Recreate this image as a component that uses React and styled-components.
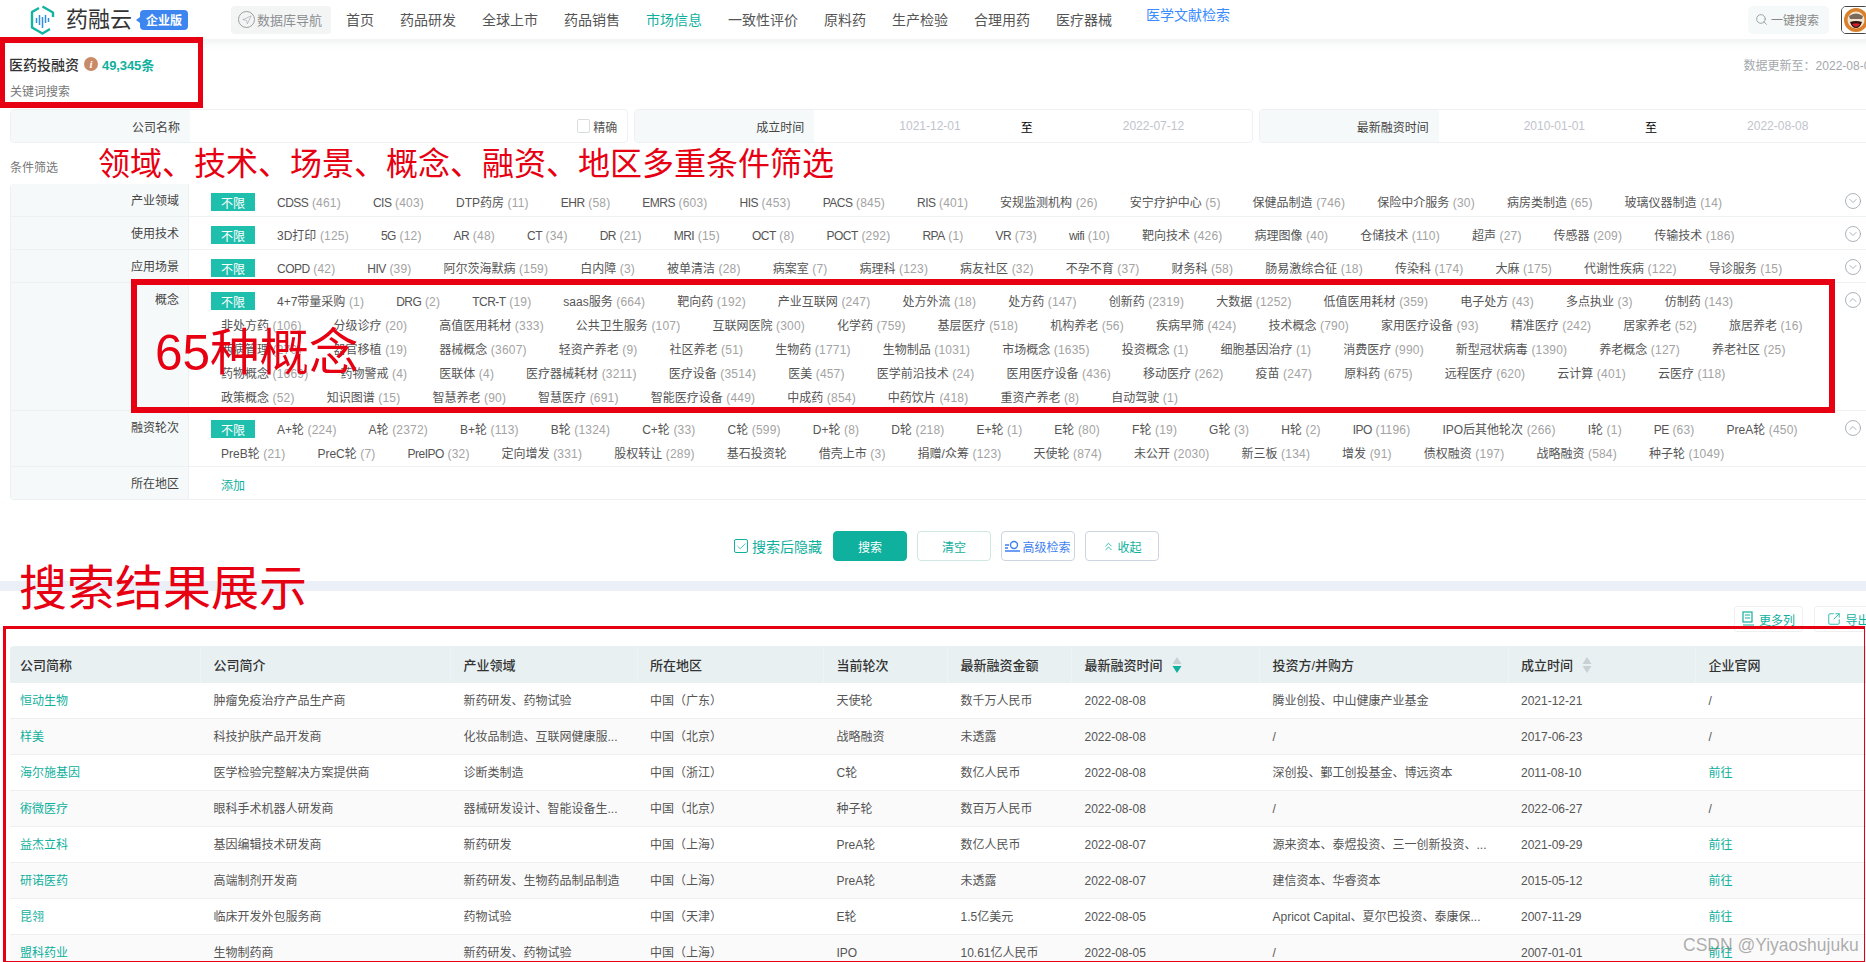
import React from "react";
import styled, { createGlobalStyle } from "styled-components";
import {
  Search,
  Navigation,
  CircleChevronDown,
  CircleChevronUp,
  Check,
  ChevronsUp,
  SquareArrowOutUpRight,
} from "lucide-react";

const TEAL = "#0fb09d";
const RED = "#e60012";
const LINE = "#edf1f2";

const GlobalStyle = createGlobalStyle`
  html, body {
    margin: 0;
    padding: 0;
    overflow: hidden;
    background: #fff;
  }
  * {
    box-sizing: border-box;
  }
`;

const Page = styled.div`
  position: relative;
  width: 1890px;
  height: 962px;
  overflow: hidden;
  font-family: "Liberation Sans", "Noto Sans CJK SC", sans-serif;
  font-size: 12px;
  color: #555;
`;

/* top bar */
const Header = styled.header`
  display: flex;
  align-items: center;
  height: 39px;
  padding: 0 21px 0 30px;
  background: #fff;
  box-shadow: 0 2px 10px rgba(60, 80, 90, 0.1);
`;

const LogoText = styled.span`
  margin-left: 11px;
  font-size: 22px;
  line-height: 26px;
  color: #333;
  width: 66px;
  white-space: nowrap;
`;

const EditionBadge = styled.span`
  position: relative;
  display: flex;
  align-items: center;
  justify-content: center;
  width: 48px;
  height: 20px;
  margin-left: 8px;
  border-radius: 4px;
  background: #3d86f0;
  color: #fff;
  font-size: 12px;
  font-weight: 700;
  &::before {
    content: "";
    position: absolute;
    left: -4px;
    top: 7px;
    border-style: solid;
    border-width: 3px 4px 3px 0;
    border-color: transparent #3d86f0 transparent transparent;
  }
`;

const DbNav = styled.div`
  display: flex;
  align-items: center;
  gap: 2px;
  width: 100px;
  height: 28px;
  margin-left: 43px;
  padding-left: 7px;
  border-radius: 4px;
  background: #f3f5f5;
  color: #8b8f91;
  font-size: 13px;
  white-space: nowrap;
`;

const CompassRing = styled.span`
  display: flex;
  align-items: center;
  justify-content: center;
  width: 17px;
  height: 17px;
  border: 1px solid #9a9ea0;
  border-radius: 50%;
  color: #9a9ea0;
`;

const NavList = styled.nav`
  display: flex;
  align-items: center;
  gap: 26px;
  height: 100%;
  margin-left: 15px;
`;

const NavItem = styled.a`
  font-size: 14px;
  line-height: 16px;
  white-space: nowrap;
  color: ${(p) => (p.$active ? TEAL : p.$blue ? "#3b8cff" : "#555")};
  ${(p) => p.$blue && "align-self: flex-start; margin: 7px 0 0 8px;"}
`;

const SearchPill = styled.div`
  display: flex;
  align-items: center;
  gap: 3px;
  width: 81px;
  height: 28px;
  margin-left: auto;
  padding-left: 7px;
  border-radius: 5px;
  background: #f5f9f9;
  color: #888;
`;

const Avatar = styled.div`
  width: 28px;
  height: 28px;
  margin-left: 12px;
  overflow: hidden;
  border: 1px solid #444;
  border-radius: 5px;
`;

/* page head */
const Section = styled.section`
  padding: 0 13px 0 10px;
`;

const TitleRow = styled.div`
  display: flex;
  align-items: center;
  height: 20px;
  margin-top: 15px;
`;

const Title = styled.h1`
  margin: 0 0 0 -1px;
  font-size: 14px;
  font-weight: 500;
  color: #333;
`;

const InfoDot = styled.span`
  display: flex;
  align-items: center;
  justify-content: center;
  width: 14px;
  height: 14px;
  margin: 0 4px 0 5px;
  border-radius: 50%;
  background: #c98a68;
  color: #fff;
  font-family: "Liberation Serif", serif;
  font-size: 11px;
  font-style: italic;
  font-weight: 700;
`;

const Count = styled.span`
  color: ${TEAL};
  font-size: 13px;
  font-weight: 700;
  letter-spacing: -0.1px;
`;

const UpdatedAt = styled.span`
  margin-left: auto;
  color: #a4a8ab;
`;

const KeywordLabel = styled.div`
  height: 16px;
  margin-top: 10px;
  line-height: 16px;
  color: #777;
`;

const FieldRow = styled.div`
  display: grid;
  grid-template-columns: repeat(3, 1fr);
  gap: 6px;
  margin-top: 9px;
`;

const Field = styled.div`
  display: flex;
  height: 34px;
  overflow: hidden;
  border: 1px solid ${LINE};
  border-radius: 4px;
`;

const FieldLabel = styled.label`
  display: flex;
  align-items: center;
  justify-content: flex-end;
  flex: 0 0 179px;
  padding-right: 10px;
  background: #f5f9f9;
  color: #444;
`;

const FieldBody = styled.div`
  display: flex;
  flex: 1;
  align-items: center;
  justify-content: flex-end;
  gap: 3px;
  padding-right: 10px;
`;

const ExactBox = styled.span`
  width: 13px;
  height: 14px;
  border: 1px solid #d8dcdf;
  border-radius: 2px;
`;

const DateRange = styled.div`
  display: flex;
  flex: 1;
  align-items: center;
  padding-left: 85px;
  color: #000;
`;

const DateValue = styled.span`
  color: #c0c4cc;
  white-space: nowrap;
`;

const DateSeparator = styled.span`
  margin: 0 90px 0 60px;
`;

const FilterCaption = styled.div`
  height: 16px;
  margin-top: 17px;
  line-height: 16px;
  color: #777;
`;

/* filter table */
const FilterTable = styled.div`
  margin-top: 8px;
  overflow: hidden;
  border: 0 solid ${LINE};
  border-width: 0 1px;
  border-radius: 4px;
`;

const FilterRow = styled.div`
  display: flex;
  min-height: 33px;
  border-bottom: 1px solid ${LINE};
`;

const RowLabel = styled.div`
  flex: 0 0 178px;
  padding: 9px 9px 0 0;
  border-right: 1px solid ${LINE};
  background: #f5f9f9;
  color: #444;
  line-height: 16px;
  text-align: right;
`;

const TagWrap = styled.div`
  flex: 0 0 1636px;
  padding: 7px 0 0 22px;
`;

const TagLine = styled.div`
  display: flex;
  height: 24px;
`;

const AllTag = styled.span`
  display: flex;
  align-items: center;
  justify-content: center;
  width: 44px;
  height: 18px;
  margin: 2px 12px 4px 0;
  background: #1fbfae;
  color: #fff;
`;

const Tag = styled.span`
  height: 24px;
  margin-right: 12px;
  padding: 0 10px;
  line-height: 24px;
  white-space: nowrap;
  color: #555;
  ${(p) => p.$latin && "letter-spacing: -0.5px;"}
  & > i {
    font-style: normal;
    letter-spacing: 0.2px;
    color: #a3a3a3;
  }
`;

const AddLink = styled.a`
  padding: 0 10px;
  line-height: 24px;
  color: ${TEAL};
`;

const RowToggle = styled.span`
  display: flex;
  margin: 8px 0 0 19px;
  color: #9aa3ab;
`;

/* action bar */
const Actions = styled.div`
  display: flex;
  align-items: center;
  gap: 10px;
  height: 30px;
  margin-top: 31px;
  padding-left: 724px;
`;

const HideToggle = styled.label`
  display: flex;
  align-items: center;
  gap: 4px;
  margin-right: 1px;
  color: ${TEAL};
  font-size: 14px;
  white-space: nowrap;
`;

const HideBox = styled.span`
  display: flex;
  align-items: center;
  justify-content: center;
  width: 14px;
  height: 14px;
  border: 1px solid ${TEAL};
  border-radius: 2px;
`;

const ActionButton = styled.button`
  display: flex;
  align-items: center;
  justify-content: center;
  gap: 2px;
  width: 74px;
  height: 30px;
  padding: 0;
  border: 1px solid ${(p) => (p.$primary ? TEAL : p.$mint ? "#cfe8e4" : "#cdd5df")};
  border-radius: 4px;
  background: ${(p) => (p.$primary ? TEAL : "#fff")};
  color: ${(p) => (p.$primary ? "#fff" : p.$blue ? "#3f7ff0" : TEAL)};
  font: inherit;
`;

const Band = styled.div`
  height: 10px;
  margin-top: 20px;
  background: #ebeff7;
`;

const ToolRow = styled.div`
  display: flex;
  justify-content: flex-end;
  gap: 11px;
  margin-top: 15px;
  padding-right: 7px;
`;

const ToolButton = styled.button`
  display: flex;
  align-items: center;
  justify-content: center;
  gap: 4px;
  width: 69px;
  height: 26px;
  padding: 0;
  border: 1px solid #eef0f0;
  border-radius: 3px;
  background: #fff;
  color: ${TEAL};
  font: inherit;
`;

/* results */
const COLUMNS = "191px 250px 186.5px 186.5px 124px 124px 188px 248.5px 187.5px 187.5px";

const Results = styled.div`
  margin: 14px 0 0 10px;
`;

const HeadRow = styled.div`
  display: grid;
  grid-template-columns: ${COLUMNS};
  height: 37px;
  border-radius: 4px 0 0 0;
  background: #e8f0f1;
`;

const HeadCell = styled.div`
  display: flex;
  align-items: center;
  gap: 9px;
  padding-left: ${(p) => (p.$first ? "10px" : "12.5px")};
  border-right: 1px solid #eef4f4;
  color: #333;
  font-size: 13px;
  font-weight: 500;
`;

const BodyRow = styled.div`
  display: grid;
  grid-template-columns: ${COLUMNS};
  height: 36px;
  border-bottom: 1px solid #eef0f0;
  background: ${(p) => (p.$odd ? "#fafafa" : "#fff")};
`;

const BodyCell = styled.div`
  overflow: hidden;
  padding: 1px 0 0 ${(p) => (p.$first ? "10px" : "12.5px")};
  line-height: 35px;
  white-space: nowrap;
  text-overflow: ellipsis;
  color: ${(p) => (p.$link ? TEAL : "#555")};
`;

/* red annotations laid over the screenshot */
const TitleFrame = styled.div`
  position: absolute;
  left: 0;
  top: 37px;
  width: 203px;
  height: 71px;
  border: 6px solid ${RED};
  border-left-width: 5px;
  border-right-width: 5px;
`;

const ConceptFrame = styled.div`
  position: absolute;
  left: 131px;
  top: 279px;
  width: 1704px;
  height: 134px;
  border: 6px solid ${RED};
`;

const ResultFrame = styled.div`
  position: absolute;
  left: 3px;
  top: 626px;
  width: 1862px;
  height: 336px;
  border: 1px solid ${RED};
  border-top-width: 3px;
  border-left-width: 3px;
`;

const Note = styled.div`
  position: absolute;
  left: ${(p) => p.$x}px;
  top: ${(p) => p.$y}px;
  color: ${RED};
  font-size: ${(p) => p.$size}px;
  line-height: 1;
  white-space: nowrap;
`;

const Watermark = styled.div`
  position: absolute;
  left: 1683px;
  top: 935px;
  color: rgba(120, 120, 120, 0.6);
  font-size: 17.5px;
  line-height: 20px;
  white-space: nowrap;
`;

// "|" starts a new line of tags, as the page wraps them
const parseLines = (text) =>
  text.split("|").map((line) =>
    line.split(",").map((t) => {
      const [name, count] = t.split(":");
      return { name, count, latin: /^[\x00-\x7f]+$/.test(name) };
    })
  );

const FILTERS = [
  {
    label: "产业领域",
    tags: "CDSS:461,CIS:403,DTP药房:11,EHR:58,EMRS:603,HIS:453,PACS:845,RIS:401,安规监测机构:26,安宁疗护中心:5,保健品制造:746,保险中介服务:30,病房类制造:65,玻璃仪器制造:14",
  },
  {
    label: "使用技术",
    tags: "3D打印:125,5G:12,AR:48,CT:34,DR:21,MRI:15,OCT:8,POCT:292,RPA:1,VR:73,wifi:10,靶向技术:426,病理图像:40,仓储技术:110,超声:27,传感器:209,传输技术:186",
  },
  {
    label: "应用场景",
    tags: "COPD:42,HIV:39,阿尔茨海默病:159,白内障:3,被单清洁:28,病案室:7,病理科:123,病友社区:32,不孕不育:37,财务科:58,肠易激综合征:18,传染科:174,大麻:175,代谢性疾病:122,导诊服务:15",
  },
  {
    label: "概念",
    open: true,
    tags: "4+7带量采购:1,DRG:2,TCR-T:19,saas服务:664,靶向药:192,产业互联网:247,处方外流:18,处方药:147,创新药:2319,大数据:1252,低值医用耗材:359,电子处方:43,多点执业:3,仿制药:143|非处方药:106,分级诊疗:20,高值医用耗材:333,公共卫生服务:107,互联网医院:300,化学药:759,基层医疗:518,机构养老:56,疾病早筛:424,技术概念:790,家用医疗设备:93,精准医疗:242,居家养老:52,旅居养老:16|两病管理:270,器官移植:19,器械概念:3607,轻资产养老:9,社区养老:51,生物药:1771,生物制品:1031,市场概念:1635,投资概念:1,细胞基因治疗:1,消费医疗:990,新型冠状病毒:1390,养老概念:127,养老社区:25|药物概念:1669,药物警戒:4,医联体:4,医疗器械耗材:3211,医疗设备:3514,医美:457,医学前沿技术:24,医用医疗设备:436,移动医疗:262,疫苗:247,原料药:675,远程医疗:620,云计算:401,云医疗:118|政策概念:52,知识图谱:15,智慧养老:90,智慧医疗:691,智能医疗设备:449,中成药:854,中药饮片:418,重资产养老:8,自动驾驶:1",
  },
  {
    label: "融资轮次",
    open: true,
    tags: "A+轮:224,A轮:2372,B+轮:113,B轮:1324,C+轮:33,C轮:599,D+轮:8,D轮:218,E+轮:1,E轮:80,F轮:19,G轮:3,H轮:2,IPO:1196,IPO后其他轮次:266,I轮:1,PE:63,PreA轮:450|PreB轮:21,PreC轮:7,PreIPO:32,定向增发:331,股权转让:289,基石投资轮,借壳上市:3,捐赠/众筹:123,天使轮:874,未公开:2030,新三板:134,增发:91,债权融资:197,战略融资:584,种子轮:1049",
  },
];

const NAV = ["首页", "药品研发", "全球上市", "药品销售", "市场信息", "一致性评价", "原料药", "生产检验", "合理用药", "医疗器械"];

const HEADS = ["公司简称", "公司简介", "产业领域", "所在地区", "当前轮次", "最新融资金额", "最新融资时间", "投资方/并购方", "成立时间", "企业官网"];

const ROWS = [
  ["恒动生物", "肿瘤免疫治疗产品生产商", "新药研发、药物试验", "中国（广东）", "天使轮", "数千万人民币", "2022-08-08", "腾业创投、中山健康产业基金", "2021-12-21", "/"],
  ["样美", "科技护肤产品开发商", "化妆品制造、互联网健康服...", "中国（北京）", "战略融资", "未透露", "2022-08-08", "/", "2017-06-23", "/"],
  ["海尔施基因", "医学检验完整解决方案提供商", "诊断类制造", "中国（浙江）", "C轮", "数亿人民币", "2022-08-08", "深创投、鄞工创投基金、博远资本", "2011-08-10", "前往"],
  ["術微医疗", "眼科手术机器人研发商", "器械研发设计、智能设备生...", "中国（北京）", "种子轮", "数百万人民币", "2022-08-08", "/", "2022-06-27", "/"],
  ["益杰立科", "基因编辑技术研发商", "新药研发", "中国（上海）", "PreA轮", "数亿人民币", "2022-08-07", "源来资本、泰煜投资、三一创新投资、...", "2021-09-29", "前往"],
  ["研诺医药", "高端制剂开发商", "新药研发、生物药品制品制造", "中国（上海）", "PreA轮", "未透露", "2022-08-07", "建信资本、华睿资本", "2015-05-12", "前往"],
  ["昆翎", "临床开发外包服务商", "药物试验", "中国（天津）", "E轮", "1.5亿美元", "2022-08-05", "Apricot Capital、夏尔巴投资、泰康保...", "2007-11-29", "前往"],
  ["盟科药业", "生物制药商", "新药研发、药物试验", "中国（上海）", "IPO", "10.61亿人民币", "2022-08-05", "/", "2007-01-01", "前往"],
];

const LogoMark = () => (
  <svg width="25" height="30" viewBox="0 0 25 30" fill="none">
    <path d="M9 3 L2 7 V22.5 L12.5 28.5 L20 24" stroke="#12b3a0" strokeWidth="2.4" strokeLinejoin="round" />
    <path d="M12.5 1.5 L23 7.5 V12" stroke="#12b3a0" strokeWidth="2.4" strokeLinejoin="round" />
    <g stroke="#2f8fe0" strokeWidth="1.5">
      <path d="M6.5 13 V18" />
      <path d="M9.5 10 V20" />
      <path d="M12.5 12 V23" />
      <path d="M15.5 10 V18" />
      <path d="M18.5 13 V17" />
    </g>
  </svg>
);

const SortIcon = ({ active }) => (
  <svg width="10" height="18" viewBox="0 0 10 18">
    <path d="M5 1 L9.5 8 H0.5 Z" fill="#c8d0d4" />
    <path d="M5 17 L0.5 10 H9.5 Z" fill={active ? TEAL : "#c8d0d4"} />
  </svg>
);

const AvatarFace = () => (
  <svg width="26" height="26" viewBox="0 0 26 26">
    <rect width="26" height="26" fill="#fff" />
    <circle cx="14" cy="13" r="12" fill="#d9802c" />
    <circle cx="14" cy="13" r="8.5" fill="#f3e2cd" />
    <path d="M7 9 Q14 4 21 9 L20 12 H8 Z" fill="#7a6a5c" />
    <path d="M8 15 Q14 13 20 15 Q18 21 14 21 Q10 21 8 15 Z" fill="#2a1510" />
    <path d="M10 17 Q14 15.5 18 17 Q16 20 14 20 Q12 20 10 17 Z" fill="#d3202a" />
  </svg>
);

const ColumnsIcon = () => (
  <svg width="13" height="16" viewBox="0 0 13 16" fill="none" stroke={TEAL} strokeWidth="1.2">
    <rect x="1" y="1" width="9" height="10" />
    <path d="M3 4 H8 M3 7 H8 M1 14 H12" />
  </svg>
);

const AdvancedIcon = () => (
  <svg width="15" height="13" viewBox="0 0 15 13" fill="none" stroke="#3f7ff0" strokeWidth="1.4">
    <circle cx="9" cy="5" r="3.5" />
    <path d="M0 5 H4 M0 8 H3 M0 11 H15" />
  </svg>
);

const App = () => {
  return (
    <Page>
      <GlobalStyle />
      <Header>
        <LogoMark />
        <LogoText>药融云</LogoText>
        <EditionBadge>企业版</EditionBadge>
        <DbNav>
          <CompassRing>
            <Navigation size={10} strokeWidth={1.4} />
          </CompassRing>
          数据库导航
        </DbNav>
        <NavList>
          {NAV.map((item) => (
            <NavItem key={item} $active={item === "市场信息"}>
              {item}
            </NavItem>
          ))}
          <NavItem $blue>医学文献检索</NavItem>
        </NavList>
        <SearchPill>
          <Search size={13} strokeWidth={1.5} color="#8a9295" />
          一键搜索
        </SearchPill>
        <Avatar>
          <AvatarFace />
        </Avatar>
      </Header>

      <Section>
        <TitleRow>
          <Title>医药投融资</Title>
          <InfoDot>i</InfoDot>
          <Count>49,345条</Count>
          <UpdatedAt>数据更新至：2022-08-08</UpdatedAt>
        </TitleRow>
        <KeywordLabel>关键词搜索</KeywordLabel>

        <FieldRow>
          <Field>
            <FieldLabel>公司名称</FieldLabel>
            <FieldBody>
              <ExactBox />
              精确
            </FieldBody>
          </Field>
          <Field>
            <FieldLabel>成立时间</FieldLabel>
            <DateRange>
              <DateValue>1021-12-01</DateValue>
              <DateSeparator>至</DateSeparator>
              <DateValue>2022-07-12</DateValue>
            </DateRange>
          </Field>
          <Field>
            <FieldLabel>最新融资时间</FieldLabel>
            <DateRange>
              <DateValue>2010-01-01</DateValue>
              <DateSeparator>至</DateSeparator>
              <DateValue>2022-08-08</DateValue>
            </DateRange>
          </Field>
        </FieldRow>

        <FilterCaption>条件筛选</FilterCaption>

        <FilterTable>
          {FILTERS.map((row) => (
            <FilterRow key={row.label}>
              <RowLabel>{row.label}</RowLabel>
              <TagWrap>
                {parseLines(row.tags).map((line, i) => (
                  <TagLine key={i}>
                    {i === 0 && <AllTag>不限</AllTag>}
                    {line.map((tag) => (
                      <Tag key={tag.name} $latin={tag.latin}>
                        {tag.name}
                        {tag.count && <i> ({tag.count})</i>}
                      </Tag>
                    ))}
                  </TagLine>
                ))}
              </TagWrap>
              <RowToggle>
                {row.open ? (
                  <CircleChevronUp size={18} strokeWidth={1.1} />
                ) : (
                  <CircleChevronDown size={18} strokeWidth={1.1} />
                )}
              </RowToggle>
            </FilterRow>
          ))}
          <FilterRow>
            <RowLabel>所在地区</RowLabel>
            <TagWrap>
              <AddLink>添加</AddLink>
            </TagWrap>
          </FilterRow>
        </FilterTable>

        <Actions>
          <HideToggle>
            <HideBox>
              <Check size={11} strokeWidth={1.6} color={TEAL} />
            </HideBox>
            搜索后隐藏
          </HideToggle>
          <ActionButton $primary>搜索</ActionButton>
          <ActionButton $mint>清空</ActionButton>
          <ActionButton $blue>
            <AdvancedIcon />
            高级检索
          </ActionButton>
          <ActionButton>
            <ChevronsUp size={13} strokeWidth={1.5} color={TEAL} />
            收起
          </ActionButton>
        </Actions>
      </Section>

      <Band />

      <ToolRow>
        <ToolButton>
          <ColumnsIcon />
          更多列
        </ToolButton>
        <ToolButton>
          <SquareArrowOutUpRight size={14} strokeWidth={1.4} color={TEAL} />
          导出
        </ToolButton>
      </ToolRow>

      <Results>
        <HeadRow>
          {HEADS.map((head, i) => (
            <HeadCell key={head} $first={i === 0}>
              {head}
              {head === "最新融资时间" && <SortIcon active />}
              {head === "成立时间" && <SortIcon />}
            </HeadCell>
          ))}
        </HeadRow>
        {ROWS.map((row, r) => (
          <BodyRow key={row[0]} $odd={r % 2 === 1}>
            {row.map((cell, c) => (
              <BodyCell key={c} $first={c === 0} $link={c === 0 || cell === "前往"}>
                {cell}
              </BodyCell>
            ))}
          </BodyRow>
        ))}
      </Results>

      <TitleFrame />
      <ConceptFrame />
      <ResultFrame />
      <Note $x={98} $y={148} $size={32}>领域、技术、场景、概念、融资、地区多重条件筛选</Note>
      <Note $x={155} $y={328} $size={49.5}>65种概念</Note>
      <Note $x={19} $y={565} $size={48}>搜索结果展示</Note>
      <Watermark>CSDN @Yiyaoshujuku</Watermark>
    </Page>
  );
};

export default App;
